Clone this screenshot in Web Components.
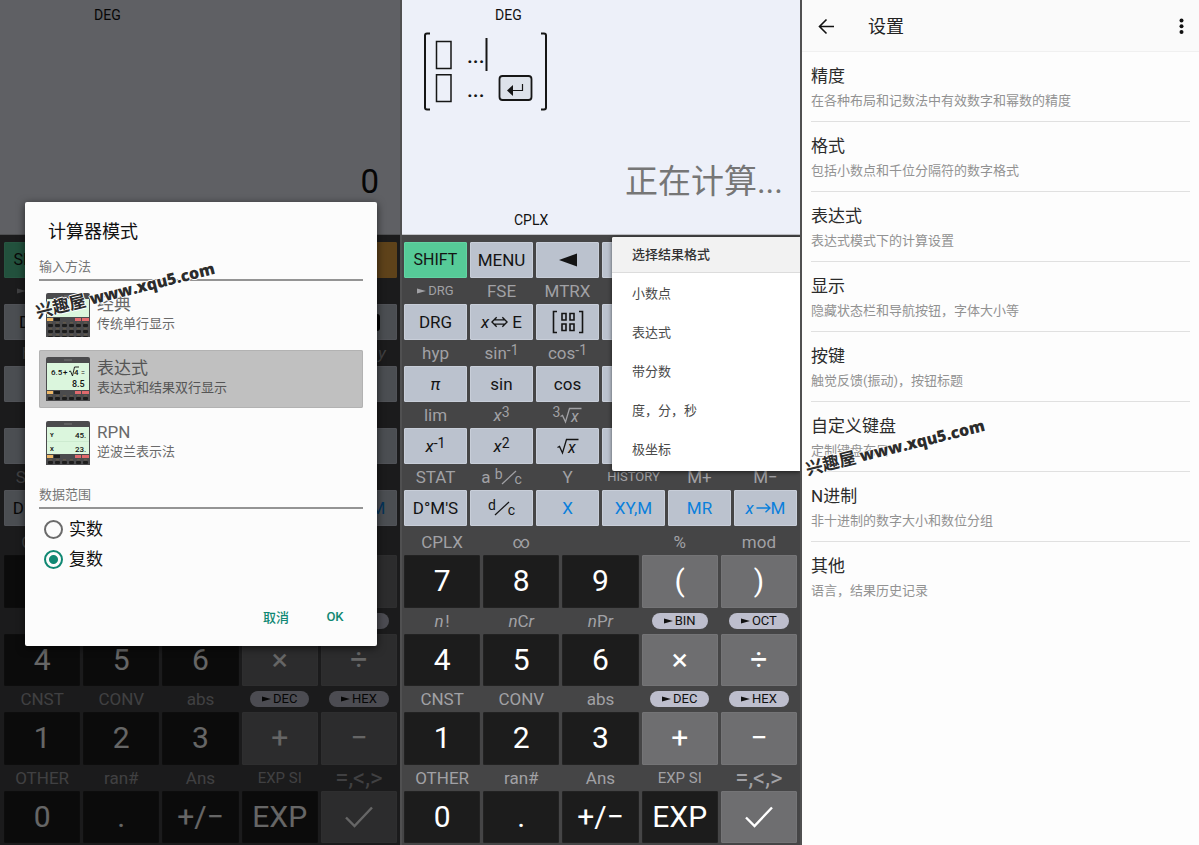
<!DOCTYPE html>
<html lang="zh-CN">
<head>
<meta charset="utf-8">
<title>计算器</title>
<style>
html, body { margin: 0; }
body { font-family: Roboto, "Noto Sans CJK SC", sans-serif; color: #111; background: #fdfdfd; }
</style>
</head>
<body>
<app-gallery></app-gallery>
<script>
const define = (name, html, setup) => {
  const tpl = document.createElement('template');
  tpl.innerHTML = html;
  customElements.define(name, class extends HTMLElement {
    connectedCallback() {
      if (this.shadowRoot) return;
      const root = this.attachShadow({ mode: 'open' });
      root.append(tpl.content.cloneNode(true));
      if (setup) setup(this, root);
    }
  });
};

/* ---------- one key with its shifted function printed above ---------- */
define('calc-key', `
<style>
:host { display: flex; flex-direction: column; min-width: 0; }
.alt { height: 26px; flex: none; display: flex; align-items: center; justify-content: center; color: #a1a1a5; font-size: 17px; line-height: 20px; white-space: nowrap; }
:host([first]) .alt { display: none; }
button { flex: 1; min-height: 36px; width: 100%; margin: 0; padding: 0; border: 1px solid #c8ced9; border-radius: 1px; background: #bbc2ce; color: #141414; font: inherit; font-size: 17px; line-height: 20px; white-space: nowrap; display: flex; align-items: center; justify-content: center; }
:host([kind="shift"]) button { background: #56cb98; border-color: #62d4a3; font-size: 16px; }
:host([kind="del"]) button { background: #eba541; border-color: #eba541; }
:host([kind="mem"]) button { color: #0a7fdc; }
:host([kind="num"]) button { background: #1c1c1c; border-color: #222; color: #fff; font-size: 30px; line-height: 36px; }
:host([kind="op"]) button { background: #6e6e70; border-color: #747476; color: #fff; font-size: 30px; line-height: 36px; }
</style>
<div class="alt"><slot name="alt"></slot></div>
<button type="button"><slot></slot></button>`);

const tri = '<svg width="9" height="6" viewBox="0 0 9 6"><path d="M0 0.5L9 3L0 5.5Z" fill="currentColor"/></svg>';
const slash = '<svg class="slash" width="16" height="16" viewBox="0 0 16 16"><path d="M1 15L15 2" stroke="currentColor" stroke-width="1.2"/></svg>';
const root = pre => `${pre}<svg width="22" height="20" viewBox="0 0 22 20"><path d="M0.5 11.5L2.5 10.5L5.5 17L9.5 3.5H21.5" fill="none" stroke="currentColor" stroke-width="1.3"/><text x="11" y="17" font-size="16" font-style="italic" fill="currentColor">x</text></svg>`;
const arrow = '<svg width="15" height="12" viewBox="0 0 15 12"><path d="M0.5 6H14M9.5 1.8L14 6L9.5 10.2" fill="none" stroke="currentColor" stroke-width="1.4"/></svg>';
const both = '<svg class="both" width="17" height="12" viewBox="0 0 18 12"><path d="M6 1L1 6L6 11M12 1L17 6L12 11M3.5 3.8H14.5M3.5 8.2H14.5" fill="none" stroke="currentColor" stroke-width="1.4"/></svg>';
const left = '<svg width="18" height="14" viewBox="0 0 18 14"><path d="M0 7L18 0.5V13.5Z" fill="currentColor"/></svg>';
const mtrx = '<svg width="32" height="24" viewBox="0 0 32 24"><path d="M5 1.5H1.5V22.5H5M27 1.5H30.5V22.5H27M10 3.5H14V10H10ZM18 3.5H22V10H18ZM10 14H14V20.5H10ZM18 14H22V20.5H18Z" fill="none" stroke="currentColor" stroke-width="1.6"/></svg>';
const del = '<svg width="28" height="17" viewBox="0 0 28 17"><path d="M8 0H25Q28 0 28 3V14Q28 17 25 17H8L0 8.5Z" fill="#0c0c0c"/></svg>';
const check = '<svg width="30" height="24" viewBox="0 0 30 24"><path d="M2 12.5L10.5 21L28 2.5" fill="none" stroke="currentColor" stroke-width="2.4"/></svg>';
const pill = t => `<span class="pill">${tri}${t}</span>`;

const fnKeys = [
  ['', 'SHIFT', 'shift'], ['', 'MENU'], ['', left], ['', ''], ['', ''], ['', '', 'del'],
  [`<span class="small">${tri}DRG</span>`, 'DRG'], ['FSE', `<i>x</i>${both}E`], ['MTRX', mtrx], ['', ''], ['', ''], ['', del],
  ['hyp', '<i>π</i>'], ['sin<sup>-1</sup>', 'sin'], ['cos<sup>-1</sup>', 'cos'], ['', ''], ['', ''], ['<i>log<sub>x</sub>&nbsp;y</i>', ''],
  ['lim', '<i>x</i><sup>-1</sup>'], ['<i>x</i><sup>3</sup>', '<i>x</i><sup>2</sup>'], [root('<sup>3</sup>'), root('')], ['', ''], ['', ''], ['', ''],
  ['STAT', 'D°M\'S'], [`a&nbsp;<sup>b</sup>${slash}<sub>c</sub>`, `<sup>d</sup>${slash}<sub>c</sub>`], ['Y', 'X', 'mem'], ['<span class="small">HISTORY</span>', 'XY,M', 'mem'], ['M+', 'MR', 'mem'], ['M−', `<i>x</i>&#8202;${arrow}M`, 'mem'],
];
const numKeys = [
  ['CPLX', '7'], ['∞', '8'], ['', '9'], ['%', '(', 'op'], ['mod', ')', 'op'],
  ['<i>n</i>&#8202;!', '4'], ['<i>n</i>C<i>r</i>', '5'], ['<i>n</i>P<i>r</i>', '6'], [pill('BIN'), '×', 'op'], [pill('OCT'), '÷', 'op'],
  ['CNST', '1'], ['CONV', '2'], ['abs', '3'], [pill('DEC'), '+', 'op'], [pill('HEX'), '−', 'op'],
  ['OTHER', '0'], ['ran#', '.'], ['Ans', '+/−'], ['<span class="mid">EXP SI</span>', 'EXP'], ['<span class="rel">=,&lt;,&gt;</span>', check, 'op'],
];
const keyHtml = ([alt, face, kind], fallback, first) =>
  `<calc-key kind="${kind || fallback}"${first ? ' first' : ''}><span slot="alt">${alt}</span><span>${face}</span></calc-key>`;

define('calc-keypad', `
<style>
:host { flex: 1; display: flex; flex-direction: column; gap: 3px; background: #454546; padding: 7px 3px 2px var(--pad-left, 2px); }
.grid { display: grid; column-gap: 3px; }
.fn { grid-template-columns: repeat(6, minmax(0, 1fr)); }
.num { grid-template-columns: repeat(5, minmax(0, 1fr)); grid-auto-rows: 1fr; flex: 1; }
span { display: inline-flex; align-items: center; }
svg { flex: none; }
sup, sub { font-size: 14px; line-height: 14px; vertical-align: baseline; }
sup { padding-bottom: 7px; }
sub { padding-top: 4px; }
i sub { font-size: 12px; }
.slash { margin: 0 -2px; }
.both { margin: 0 4px 0 2px; }
.small { font-size: 13px; }
.mid { font-size: 15px; }
.rel { font-size: 24px; }
.pill { height: 16px; padding: 0 12px; border-radius: 8px; background: #bdbecd; color: #111; font-size: 13px; line-height: 16px; }
.pill svg, .small svg { margin-right: 2px; }
</style>
<div class="grid fn">${fnKeys.map((k, n) => keyHtml(k, 'fn', n < 6)).join('')}</div>
<div class="grid num">${numKeys.map(k => keyHtml(k, 'num')).join('')}</div>`);

/* ---------- calculator display ---------- */
define('calc-display', `
<style>
:host { display: flex; flex-direction: column; height: 234px; background: #edf0f9; border-bottom: 1px solid #c4c5ca; font-size: 14px; line-height: 20px; }
.angle { padding: 5px 0 5px var(--angle-left, 93px); }
.expr { height: 82px; padding-left: 20px; }
.result { margin: auto var(--result-right, 17px) 8px 0; text-align: right; font-size: 33px; line-height: 40px; color: var(--result-color, #111); }
.flags { padding: 0 0 4px 112px; }
</style>
<div class="angle">DEG</div>
<div class="expr"><slot name="expr"></slot></div>
<div class="result"><slot></slot></div>
<div class="flags">CPLX</div>`);

define('matrix-entry', `
<style>:host { display: block; } svg { display: block; }</style>
<svg width="128" height="82" viewBox="0 0 128 82" fill="none" stroke="#161616">
  <path d="M8 3.5H5Q3 3.5 3 5.5V77.5Q3 79.500 5 79.500H8M119 3.5H122Q124 3.5 124 5.5V77.5Q124 79.500 122 79.500H119" stroke-width="2"/>
  <path d="M14.5 11.5H29V38.5H14.5ZM14.5 44.8H29V71.5H14.5Z" stroke-width="1.5"/>
  <rect x="77.5" y="46" width="32" height="24" rx="3" fill="#dde2ea" stroke-width="1.8"/>
  <path d="M100.5 54V60.5H89" stroke-width="1.2"/>
  <path d="M85 60.5L91 55V66Z" fill="#161616" stroke="none"/>
  <path d="M64.5 8V41" stroke-width="2"/>
  <g fill="#161616" stroke="none" font-size="21" font-weight="500"><text x="45" y="33">...</text><text x="45" y="67">...</text></g>
</svg>`);

define('calc-screen', `
<style>
:host { position: relative; display: flex; flex-direction: column; min-width: 0; }
</style>
<calc-display><slot name="expr" slot="expr"></slot><slot name="result"></slot></calc-display>
<calc-keypad></calc-keypad>
<slot name="overlay"></slot>`);

/* ---------- dialog ---------- */
define('mode-thumb', `
<style>:host { display: block; flex: none; } svg { display: block; }</style>
<svg width="44" height="44" viewBox="0 0 44 44">
  <path d="M0 44V2Q0 0 2 0H42Q44 0 44 2V44Z" fill="#4b4b4d"/>
  <path d="M18 3H26" stroke="#777" stroke-width="1"/>
  <g class="body"></g>
</svg>`, (el, root) => {
  const y = el.getAttribute('mode') === 'classic' ? 25 : 34;
  const keys = [];
  for (let ky = y + 6; ky < 44; ky += 6)
    for (let n = 0; n < 6; n++)
      keys.push(`<rect x="${2 + n * 7}" y="${ky}" width="5" height="3" rx="1" fill="#1d1d1d"/><path d="M${3 + n * 7} ${ky - 1.2}H${6 + n * 7}" stroke="#8f7446" stroke-width="0.5"/>`);
  const texts = {
    classic: '',
    expr: '<text x="5" y="18">6.5</text><text x="17" y="18">+</text><path d="M23 14.500L24.500 14L26.500 19L28.500 10H33" fill="none" stroke="#111" stroke-width="0.9"/><text x="28" y="18">4</text><text x="35" y="18" font-size="7">=</text><text x="26" y="30" font-size="9">8.5</text>',
    rpn: '<path d="M1 20.5H43" stroke="#cdebd0"/><text x="4" y="16" font-size="6" font-weight="700">Y</text><text x="29" y="16.5">45.</text><text x="4" y="30" font-size="6" font-weight="700">X</text><text x="29" y="30.5">23.</text>',
  };
  root.querySelector('.body').innerHTML = `<rect x="1" y="6" width="42" height="${y - 7}" fill="#dbf6dd"/>
  <rect x="1" y="${y}" width="6" height="3" fill="#eeb868"/><rect x="8" y="${y}" width="6" height="3" fill="#1c1c1c"/>
  <rect x="29" y="${y}" width="6" height="3" fill="#e0696d"/><rect x="36" y="${y}" width="7" height="3" fill="#e0696d"/>${keys.join('')}
  <g font-size="8" font-weight="500" fill="#111">${texts[el.getAttribute('mode')]}</g>`;
});

define('mode-option', `
<style>
:host { display: block; }
button { width: 100%; height: 58px; margin: 0; padding: 0 7px; border: 0; border-radius: 2px; background: none; display: flex; align-items: center; gap: 7px; text-align: left; font: inherit; color: #6a6a6a; }
:host([selected]) button { background: #c0c0c0; box-shadow: inset 0 0 0 1px #b2b2b2; color: #555; }
.words { padding-bottom: 2px; }
.name { font-size: 17px; line-height: 20px; }
.note { font-size: 13px; line-height: 20px; }
.name, .note { display: block; }
</style>
<button type="button"><slot name="thumb"></slot><span class="words"><span class="name"><slot></slot></span><span class="note"><slot name="note"></slot></span></span></button>`);

define('mode-dialog', `
<style>
.scrim { position: absolute; inset: 0; background: rgba(0,0,0,.6); }
.box { position: absolute; left: 25px; right: 23px; top: 202px; box-sizing: border-box; padding: 18px 14px 12px; background: #fcfcfc; border-radius: 2px; box-shadow: 0 2px 8px rgba(0,0,0,.6); }
h2 { margin: 0 0 13px; padding-left: 9px; font-size: 18px; line-height: 24px; font-weight: 400; }
h3 { margin: 0; padding-bottom: 2px; border-bottom: 2px solid #949494; font-size: 13px; line-height: 20px; font-weight: 400; color: #757575; }
.modes { display: flex; flex-direction: column; gap: 6px; padding: 5px 0 13px; }
.range { padding: 5px; }
label { display: flex; align-items: center; gap: 6px; height: 30px; font-size: 17px; line-height: 24px; }
input { appearance: none; box-sizing: border-box; width: 19px; height: 19px; margin: 0; border: 2px solid #6b6b6b; border-radius: 50%; }
input:checked { border-color: #108873; background: radial-gradient(circle, #108873 0 4px, transparent 5px); }
.actions { display: flex; justify-content: flex-end; gap: 9px; margin-top: 19px; padding-right: 3px; }
.actions button { min-width: 50px; height: 36px; padding: 0 8px; border: 0; background: none; font: inherit; font-size: 13px; font-weight: 500; color: #108873; }
</style>
<div class="scrim"></div>
<div class="box" role="dialog" aria-labelledby="t">
  <h2 id="t">计算器模式</h2>
  <h3>输入方法</h3>
  <div class="modes">
    <mode-option><mode-thumb slot="thumb" mode="classic"></mode-thumb>经典<span slot="note">传统单行显示</span></mode-option>
    <mode-option selected><mode-thumb slot="thumb" mode="expr"></mode-thumb>表达式<span slot="note">表达式和结果双行显示</span></mode-option>
    <mode-option><mode-thumb slot="thumb" mode="rpn"></mode-thumb>RPN<span slot="note">逆波兰表示法</span></mode-option>
  </div>
  <h3>数据范围</h3>
  <div class="range">
    <label><input type="radio" name="range">实数</label>
    <label><input type="radio" name="range" checked>复数</label>
  </div>
  <div class="actions"><button type="button">取消</button><button type="button">OK</button></div>
</div>`);

/* ---------- result format menu ---------- */
define('format-menu', `
<style>
:host { position: absolute; left: 210px; right: 0; top: 237px; background: #fff; border-radius: 2px 0 0 2px; box-shadow: 0 1px 4px rgba(0,0,0,.6); padding-bottom: 2px; font-size: 13px; line-height: 20px; }
h2 { margin: 0 0 1px; padding: 8px 20px 7px; font-size: 13px; line-height: 20px; font-weight: 500; color: #333; background: #f2f2f2; border-bottom: 1px solid #dcdcdc; border-radius: 2px 0 0 0; }
button { display: block; width: 100%; height: 39px; padding: 0 20px; border: 0; background: none; text-align: left; font: inherit; color: #4a4a4a; }
</style>
<h2>选择结果格式</h2>
<button type="button">小数点</button><button type="button">表达式</button><button type="button">带分数</button><button type="button">度，分，秒</button><button type="button">极坐标</button>`);

/* ---------- settings ---------- */
define('settings-row', `
<style>
:host { display: block; border-bottom: 1px solid #e0e0e0; }
:host(:last-of-type) { border-bottom: 0; }
a { display: block; padding: 12px 0 10px; color: #2b2b2b; text-decoration: none; }
.name { display: block; font-size: 17px; line-height: 24px; margin-bottom: 3px; }
.note { display: block; font-size: 13px; line-height: 20px; color: #929292; }
</style>
<a href="#"><span class="name"><slot></slot></span><span class="note"><slot name="note"></slot></span></a>`);

define('settings-screen', `
<style>
:host { position: relative; display: block; min-width: 0; background: #fdfdfd; }
header { display: flex; align-items: center; height: 52px; padding: 0 9px 0 14px; background: #fafafa; border-bottom: 1px solid #f0f0f0; box-sizing: border-box; }
h1 { flex: 1; margin: 0 0 0 31px; padding-top: 2px; font-size: 18px; line-height: 24px; font-weight: 400; color: #222; }
header button { border: 0; padding: 0; background: none; color: #111; display: flex; }
.list { padding: 0 9px; }
</style>
<header>
  <button type="button" aria-label="返回"><svg width="21" height="20" viewBox="0 0 21 20"><path d="M18 10.5H4M10.5 3.5L3.5 10.5L10.5 17.5" fill="none" stroke="currentColor" stroke-width="1.6"/></svg></button>
  <h1>设置</h1>
  <button type="button" aria-label="更多"><svg width="17" height="20" viewBox="0 0 17 20"><g fill="currentColor"><circle cx="8.500" cy="4.500" r="2"/><circle cx="8.500" cy="10.300" r="2"/><circle cx="8.500" cy="16" r="2"/></g></svg></button>
</header>
<div class="list">
  <settings-row>精度<span slot="note">在各种布局和记数法中有效数字和幂数的精度</span></settings-row>
  <settings-row>格式<span slot="note">包括小数点和千位分隔符的数字格式</span></settings-row>
  <settings-row>表达式<span slot="note">表达式模式下的计算设置</span></settings-row>
  <settings-row>显示<span slot="note">隐藏状态栏和导航按钮，字体大小等</span></settings-row>
  <settings-row>按键<span slot="note">触觉反馈(振动)，按钮标题</span></settings-row>
  <settings-row>自定义键盘<span slot="note">定制键盘布局</span></settings-row>
  <settings-row>N进制<span slot="note">非十进制的数字大小和数位分组</span></settings-row>
  <settings-row>其他<span slot="note">语言，结果历史记录</span></settings-row>
</div>
<slot></slot>`);

define('site-mark', `
<style>
:host { position: absolute; white-space: nowrap; transform: rotate(-14deg); transform-origin: 0 100%; font: 700 17px/24px "Open Sans", "Noto Sans CJK SC", sans-serif; color: #2c2c2c; text-shadow: 1px 0 #fff, -1px 0 #fff, 0 1px #fff, 0 -1px #fff; pointer-events: none; }
b { font-size: 16px; }
</style>兴趣屋 <b>www.xqu5.com</b>`);

define('app-gallery', `
<style>
:host { display: grid; grid-template-columns: 400fr 400fr 399fr; min-height: 100vh; overflow: hidden; }
calc-screen:first-of-type { --pad-left: 4px; --angle-left: 94px; --result-right: 21px; }
calc-screen + calc-screen, settings-screen { border-left: 2px solid #505051; }
.busy { --result-color: #767676; }
.on-dialog { left: 39px; top: 300px; }
.on-settings { left: 7px; top: 457px; }
</style>
<calc-screen>
  <span slot="result">0</span>
  <mode-dialog slot="overlay"></mode-dialog>
  <site-mark slot="overlay" class="on-dialog"></site-mark>
</calc-screen>
<calc-screen class="busy">
  <matrix-entry slot="expr"></matrix-entry>
  <span slot="result">正在计算...</span>
  <format-menu slot="overlay"></format-menu>
</calc-screen>
<settings-screen><site-mark class="on-settings"></site-mark></settings-screen>`);
</script>
</body>
</html>
